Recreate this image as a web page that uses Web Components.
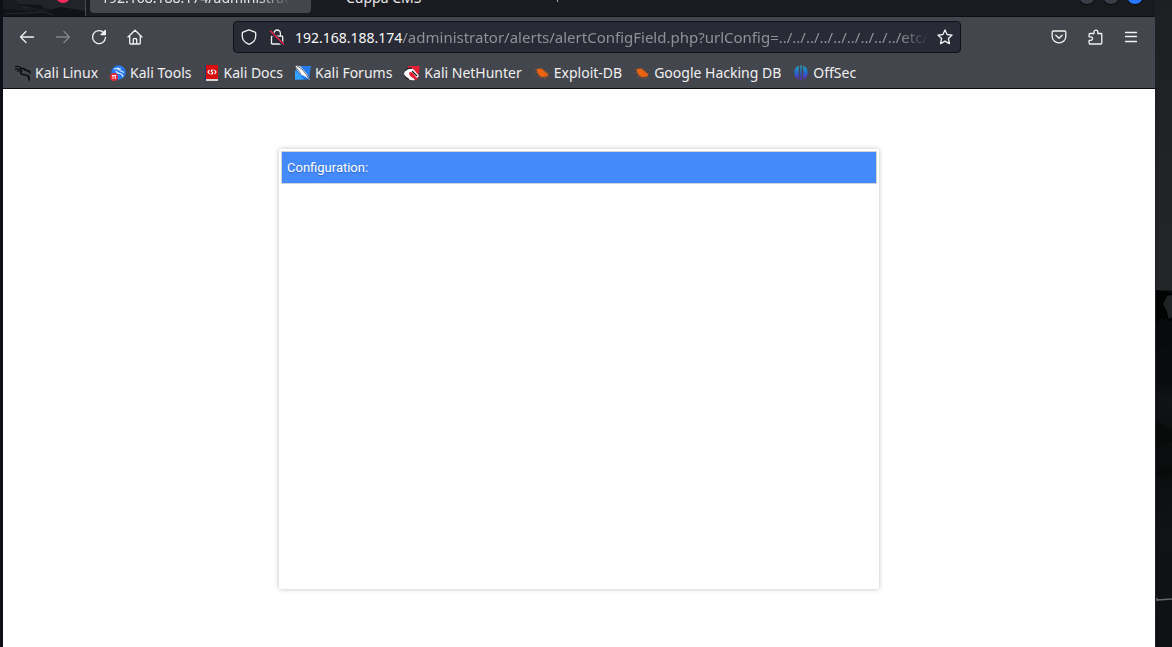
<!DOCTYPE html>
<html lang="en">
<head>
<meta charset="utf-8">
<title>Configuration</title>
<style>
  html, body { margin: 0; min-height: 100vh; background: #111214; }
  body { font-family: "Noto Sans", sans-serif; display: flex; }
  browser-desktop { flex: 1; }
</style>
</head>
<body>
<browser-desktop>
  <tab-strip></tab-strip>
  <nav-bar></nav-bar>
  <bookmark-bar>
    <book-mark icon="dragon">Kali Linux</book-mark>
    <book-mark icon="tools">Kali Tools</book-mark>
    <book-mark icon="docs">Kali Docs</book-mark>
    <book-mark icon="forums">Kali Forums</book-mark>
    <book-mark icon="nethunter">Kali NetHunter</book-mark>
    <book-mark icon="bug">Exploit-DB</book-mark>
    <book-mark icon="bug">Google Hacking DB</book-mark>
    <book-mark icon="offsec">OffSec</book-mark>
  </bookmark-bar>
  <config-panel>Configuration:</config-panel>
</browser-desktop>

<script>
function define(name, html, setup) {
  customElements.define(name, class extends HTMLElement {
    constructor() {
      super();
      this.attachShadow({ mode: "open" }).innerHTML = html;
    }
    connectedCallback() { if (setup) setup(this); }
  });
}

define("browser-desktop", `
<style>
  :host { display: grid; grid-template-columns: 1fr 17px; background: #0d0e17; }
  .window { margin-left: 3px; background: #fff; min-width: 0; display: flex; flex-direction: column; }
  .wall { border-left: 1px solid #1c1e29; overflow: hidden; background: linear-gradient(#1d1f22 0, #232528 290px, #08090a 291px, #0b0c0d 340px, #0a0b0c 380px, #111213 400px, #0b0c0d 460px, #111213 530px, #0f1011 100%); }
  svg { display: block; width: 16px; height: 647px; }
</style>
<div class="window"><slot></slot></div>
<div class="wall"><svg viewBox="0 0 16 647" aria-hidden="true">
  <path d="M0 290l16 3v28L4 318 0 325z" fill="#020303"/>
  <path d="M16 295l-5 1-4 8 4 8 2 7 3-2z" fill="#202225"/>
  <path d="M0 325l10-7 6 5v22l-16 5z" fill="#090a0b"/>
  <path d="M0 420l16 10v12l-16 6zM0 470l16-2v6l-16 4z" fill="#090a0a"/>
  <path d="M1 600l15-1" stroke="#66686a" stroke-width="1.6"/>
  <path d="M1 598v3" stroke="#77797b" stroke-width="1.2"/>
</svg></div>`);

define("tab-strip", `
<style>
  :host { display: flex; height: 16px; overflow: hidden; background: #1a1b20; border-bottom: 1px solid #0d0e12; color: #e7e7e8; font-size: 14px; line-height: 20px; }
  .pinned { flex: none; width: 82px; height: 16px; border-right: 1px solid #4a4b51; margin-right: 4px; }
  .pinned svg { display: block; }
  button { flex: none; box-sizing: border-box; height: 36px; margin-top: -23px; padding: 11px 11px 5px; border: 0; border-radius: 4px; background: none; color: inherit; font: inherit; text-align: left; white-space: nowrap; overflow: hidden; }
  .active { width: 221px; background: #44464d; }
  .active span { display: block; overflow: hidden; -webkit-mask-image: linear-gradient(90deg, #000 155px, transparent 190px); mask-image: linear-gradient(90deg, #000 155px, transparent 190px); }
  .second { width: 240px; padding-left: 35px; }
  .mark { width: 1px; height: 2px; background: #aaabae; margin-left: 6px; }
  .controls { margin-left: auto; margin-right: 12px; display: flex; gap: 8px; }
  .controls button { width: 16px; height: 16px; margin-top: -12px; padding: 0; border-radius: 8px; background: #3a3d48; box-shadow: 0 0 0 1px #0b0c10; }
  .controls .close { background: #2777ff; }
</style>
<div class="pinned"><svg width="82" height="16" viewBox="0 0 82 16" aria-hidden="true">
  <path d="M12 0h70v12H50l-8-5-20 2z" fill="#22242a"/>
  <path d="M0 9l38 3 20-5 24 4v5H0zM10 4l30 1-2 4z" fill="#111318"/>
  <path d="M2 14l40-2 8 3" stroke="#292b31" fill="none"/>
  <circle cx="60" cy="-4" r="7" fill="#ff2860"/></svg></div>
<button class="active"><span>192.168.188.174/administrator/</span></button>
<button class="second">Cuppa CMS</button>
<i class="mark"></i>
<div class="controls"><button aria-label="Minimize"></button><button aria-label="Maximize"></button><button class="close" aria-label="Close"></button></div>`);

define("nav-bar", `
<style>
  :host { display: flex; align-items: center; height: 40px; padding: 0 6px; background: #44464d; color: #f2f2f3; }
  button { flex: none; display: grid; place-items: center; width: 36px; height: 32px; padding: 0; border: 0; background: none; color: inherit; }
  svg { display: block; width: 16px; height: 16px; flex: none; fill: none; stroke: currentColor; stroke-width: 1.3; stroke-linecap: round; stroke-linejoin: round; }
  .off { color: #85868b; }
  .space { flex: 10; }
  .url { flex: 90; min-width: 0; box-sizing: border-box; height: 32px; display: flex; align-items: center; border: 1px solid #101116; border-radius: 4px; background: #282a36; padding-left: 7px; }
  .url button { width: 30px; }
  .id { display: flex; gap: 12px; margin-right: 10px; }
  .address { flex: 1; min-width: 0; display: flex; align-items: baseline; }
  label { flex: none; font-size: 14px; line-height: 30px; color: #f8f8f8; }
  input { flex: 1; min-width: 0; height: 30px; padding: 0; border: 0; outline: 0; background: none; font: 15px "Noto Sans", sans-serif; color: #909197; -webkit-mask-image: linear-gradient(270deg, transparent, #000 30px); mask-image: linear-gradient(270deg, transparent, #000 30px); }
</style>
<button aria-label="Back"><svg viewBox="0 0 16 16"><path d="M14.500 8h-13M7 2.500L1.500 8 7 13.500"/></svg></button>
<button class="off" aria-label="Forward"><svg viewBox="0 0 16 16"><path d="M1.500 8h13M9 2.500L14.500 8 9 13.500"/></svg></button>
<button aria-label="Reload"><svg viewBox="0 0 16 16"><path d="M12.800 3.700A6.500 6.500 0 1 0 14.500 8.500"/><path d="M14.300 1.500v4.200h-4.200z" fill="currentColor"/></svg></button>
<button aria-label="Home"><svg viewBox="0 0 16 16"><path d="M1 8l7-6.800L15 8M2.700 6.600V14q0 1 1 1h8.600q1 0 1-1V6.600M6.300 14.500v-4q0-.8.800-.8h1.800q.8 0 .8.800v4"/></svg></button>
<span class="space"></span>
<div class="url">
  <div class="id">
    <svg viewBox="0 0 16 16"><path d="M8 .8l6 2.300q.7.300.7 1v3.200c0 4-2.700 6.500-6.700 8.100C4 13.800 1.300 11.300 1.300 7.300V4.100q0-.7.700-1z"/></svg>
    <svg viewBox="0 0 16 16"><path d="M5 7V4.200a3.200 3.200 0 0 1 6.400 0V7M3.300 7.200h9.600q.8 0 .8.800v6.200q0 .8-.8.800H3.300q-.8 0-.8-.8V8q0-.8.800-.8z"/><path d="M1.200 2.500l13 13" stroke="#282a36" stroke-width="3.500"/><path d="M1.500 2l13 13" stroke="#e9224c" stroke-width="1.500"/></svg>
  </div>
  <div class="address"><label for="path">192.168.188.174</label><input id="path" spellcheck="false" value="/administrator/alerts/alertConfigField.php?urlConfig=../../../../../../../../../etc/passwd"></div>
  <button aria-label="Bookmark this page"><svg viewBox="0 0 16 16"><path d="M8 .9l2.100 4.600 5 .6-3.700 3.400 1 5.100L8 12.100l-4.400 2.500 1-5.100L.9 6.100l5-.6z"/></svg></button>
</div>
<span class="space"></span>
<button aria-label="Save to Pocket"><svg viewBox="0 0 16 16"><path d="M2.200 2h11.600q1 0 1 1v4.600a6.800 6.300 0 0 1-13.600 0V3q0-1 1-1zM4.800 6.200L8 9.300l3.200-3.100"/></svg></button>
<button aria-label="Extensions"><svg viewBox="0 0 16 16"><path d="M2.500 15h11.300q1 0 1-1V5.300q0-.8-.8-.8H10.800V3a1.900 1.900 0 0 0-3.800 0v1.500H3q-.9 0-.9.900v2.400h1.700a1.800 1.800 0 0 1 0 3.600H2.100V14q0 1 .8 1z"/></svg></button>
<button aria-label="Menu"><svg viewBox="0 0 16 16"><path d="M2.500 3.500h11M2.500 7.500h11M2.500 12.500h11"/></svg></button>`);

define("bookmark-bar", `
<style>
  :host { display: flex; gap: 12px; height: 31px; padding-left: 12px; background: #44464d; border-bottom: 1px solid #0c0d10; color: #f0f0f1; }
</style><slot></slot>`);

const icons = {
  dragon: `<path d="M0 1.500q4-.5 6 1.500M0 4q3-.5 5 1M2 6.500q3-1.500 5-1" fill="none" stroke="#0b0b0d" stroke-width="1.100"/><path d="M5 3.500q4-.5 5.500 1.500l4 1.500.5 2M7 5.500Q4.500 8 7 9.200c2 .8 5.500.3 6.500 2.300.7 1.500.8 2.500.8 4" fill="none" stroke="#0b0b0d" stroke-width="1.700"/>`,
  tools: `<circle cx="8.500" cy="7.500" r="7.200" fill="#2878ee"/><path d="M4 4q4-1 6 1.500l4 2M6 6q1 2.500 4 2.500 2.500.5 3 3.500M7 3l4 1" fill="none" stroke="#d4e5fb" stroke-width="1.200"/><circle cx="4" cy="12" r="4" fill="#e52836"/><path d="M2 10.500h4.200M3 10.500V14M5.300 10.500V14" stroke="#fff" stroke-width=".9"/>`,
  docs: `<path d="M1 0h3v16H1z" fill="#143a78"/><path d="M2 0h12v14H2z" fill="#da1010"/><path d="M2 14h12v2H2z" fill="#d8d1cf"/><path d="M5.500 5L4 7l1.500 2M10.500 5l1.500 2-1.500 2M9.500 5H8q-1.500 1 0 2t0 2H6.500" stroke="#fff" stroke-width="1.200" fill="none"/>`,
  forums: `<path d="M3 1h13l-2 13.500H0V7z" fill="#267bec"/><path d="M0 5l9 9.500H0z" fill="#31a4ff"/><path d="M0 1q5-1 7 2l5 6 3 6-4-3-6-3-3-4z" fill="#fff"/><path d="M0 1l3 4 3 4M2 1l5 3 4 5 3 5" stroke="#3e424c" stroke-width=".8" fill="none"/>`,
  nethunter: `<path d="M4 1h12l-2.500 13.500H3z" fill="#e51f36"/><path d="M0 9q1-6 6-6 3 0 5 3l4 5-2 2-4-5q-3-2-4 0 0 3 4 5l2 2q-5 1-8-2z" fill="#fff"/><path d="M1 6q3-4 7-2.500M8 6l5 5M1 12l4 2.500" stroke="#17181c" stroke-width="1.100" fill="none"/>`,
  bug: `<path d="M2.500 4.500q4-2 6.500.5l5 4-.5 2.500-5 .8Q3.500 11 2.500 4.500z" fill="#ed6410"/><path d="M1 8l4-1M3 12l4-2M7 14l1-3M11 14.500l-1-4M8 3l2 3M12 5l-2 3M15.500 8l-4 1M3 5L.5 4.500M11 10l3.500 3" stroke="#b85623" stroke-width=".6"/>`,
  offsec: `<defs><linearGradient id="g" gradientUnits="userSpaceOnUse" x1="0" y1="0" x2="0" y2="15"><stop stop-color="#25a8bd"/><stop offset=".5" stop-color="#2669c5"/><stop offset="1" stop-color="#5f24c5"/></linearGradient></defs><path d="M5.800.8v13.500A7.300 7.300 0 0 1 5.800.8zM10.200.8v13.500A7.300 7.300 0 0 0 10.200.8zM7.300.2h1.400v15H7.300z" fill="url(#g)"/>`
};

define("book-mark", `
<style>
  :host { display: block; flex: none; }
  a { display: flex; align-items: center; gap: 4px; height: 31px; color: inherit; text-decoration: none; font-size: 14px; line-height: 20px; white-space: nowrap; }
  svg { width: 16px; height: 16px; }
</style>
<a href="#"><svg viewBox="0 0 16 16" aria-hidden="true"></svg><span><slot></slot></span></a>`,
  el => { el.shadowRoot.querySelector("svg").innerHTML = icons[el.getAttribute("icon")]; });

define("config-panel", `
<style>
  :host { display: block; box-sizing: border-box; width: 600px; max-width: 100%; min-height: 440px; margin: 60px auto 0; padding: 2px; background: #fff; border-radius: 2px; box-shadow: 0 0 5px rgba(0,0,0,.25); }
  h1 { margin: 0; padding: 0 5px; border: 1px solid #d0d3da; background: #448afa; color: #fff; font: 400 13px/31px Roboto, sans-serif; text-shadow: 0 1px 1px rgba(0,0,0,.25); }
</style>
<h1><slot></slot></h1>`);
</script>
</body>
</html>
